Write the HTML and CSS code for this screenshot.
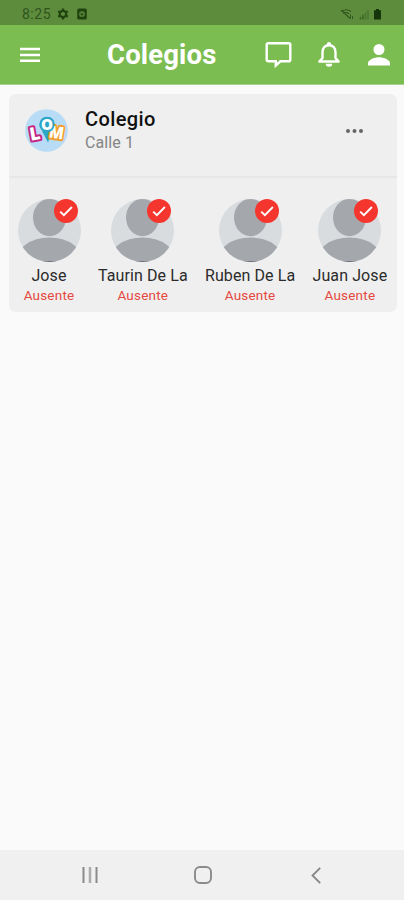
FILE: index.html
```html
<!DOCTYPE html>
<html lang="es">
  <head>
    <meta charset="UTF-8" />
    <meta name="viewport" content="width=device-width, initial-scale=1.0" />
    <title>Colegios</title>
    <link rel="stylesheet" href="styles.css">
  </head>
  <body>
    <!-- shared symbols -->
    <svg class="defs" width="0" height="0">
      <symbol id="avatar" viewBox="0 0 63 63">
        <clipPath id="round"><circle cx="31.5" cy="31.5" r="31.5" /></clipPath>
        <g clip-path="url(#round)">
          <rect width="63" height="63" fill="#d8dcdf" />
          <ellipse cx="31.5" cy="18.5" rx="16.5" ry="18.8" fill="#a4a8ad" />
          <ellipse cx="31.5" cy="63" rx="34" ry="24.5" fill="#a4a8ad" />
          <path d="M24 63h15" stroke="#55585c" stroke-width="1.4" />
        </g>
      </symbol>
      <symbol id="check" viewBox="0 0 24 24">
        <circle cx="12" cy="12" r="12" fill="#f5362f" />
        <path d="M6.2 12.6l3.7 3.6 8-8.2" fill="none" stroke="#fff" stroke-width="1.9" />
      </symbol>
    </svg>

    <div class="status-bar">
      <span class="clock">8:25</span>
      <svg class="gear" width="12" height="12" viewBox="0 0 12 12">
        <circle cx="6" cy="6" r="3.2" fill="none" stroke="#21440f" stroke-width="2.2" />
        <path d="M6 .4v2M6 9.6v2M1.2 3.2l1.7 1M9.1 7.8l1.7 1M1.2 8.8l1.7-1M9.1 4.2l1.7-1" stroke="#21440f" stroke-width="2.2" />
      </svg>
      <svg class="app" width="10" height="12" viewBox="0 0 10 12">
        <rect x=".2" y=".5" width="9.6" height="11" rx="1.6" fill="#21440f" />
        <circle cx="5" cy="6" r="2.2" fill="none" stroke="#5d8c3d" stroke-width="1.3" />
        <path d="M5 4.6v1.6" stroke="#5d8c3d" />
      </svg>
      <svg class="signal" width="44" height="12" viewBox="0 0 44 12">
        <path d="M1 3.5q5-3.5 10 0M3 5.6q3-2.3 6 .2M1.5 2l8.5 8.5" fill="none" stroke="#34591e" stroke-width="1.2" />
        <path d="M10.5 6.5v4M12.5 8v3" stroke="#34591e" />
        <path d="M20.5 9v2.5M23 6.8v4.7" stroke="#3b6422" stroke-width="1.5" />
        <path d="M25.5 4.5v7M28 2v9.5" stroke="#4a7530" stroke-width="1.5" />
        <path d="M34 2.3h2V1h3v1.3h2v9.2h-7z" fill="#17350a" />
      </svg>
    </div>

    <header class="app-bar">
      <svg class="menu" width="20" height="15" viewBox="0 0 20 15">
        <path d="M0 2h20M0 8h20M0 13.7h20" stroke="#fff" stroke-width="2.4" />
      </svg>
      <h1>Colegios</h1>
      <svg class="chat" width="27" height="27" viewBox="0 0 27 27">
        <path d="M3.3 2.2h20.4q1.6 0 1.6 1.6v14.9q0 1.6-1.6 1.6h-8.3l-4.6 4.2v-4.2H3.3q-1.6 0-1.6-1.6V3.8q0-1.6 1.6-1.6z" fill="none" stroke="#fff" stroke-width="2.4" />
      </svg>
      <svg class="bell" width="24" height="27" viewBox="0 0 24 27">
        <path d="M2.3 20.5l3.2-3.4V11.5c0-4.500 2.500-7.300 6.500-7.300s6.500 2.800 6.500 7.300v5.600l3.200 3.400z" fill="none" stroke="#fff" stroke-width="2.4" stroke-linejoin="round" />
        <circle cx="12" cy="3.2" r="2.1" fill="#fff" />
        <path d="M8.7 22.8h6.600a3.300 3 0 0 1-6.600 0z" fill="#fff" />
      </svg>
      <svg class="user" width="22" height="22" viewBox="0 0 22 22">
        <circle cx="11" cy="5.5" r="5.5" fill="#fff" />
        <path d="M0 21.5v-2.200c0-3.900 7.300-6 11-6s11 2.100 11 6v2.200z" fill="#fff" />
      </svg>
    </header>

    <main>
      <section class="card">
        <div class="card-head">
          <svg class="logo" width="43" height="43" viewBox="0 0 43 43">
            <circle cx="21.5" cy="21.5" r="21.3" fill="#b9dcf6" />
            <circle cx="22" cy="15.5" r="7.7" fill="#2da5c8" />
            <path d="M17 22l6 11.500 4-12z" fill="#2da5c8" />
            <g class="logo-text">
              <text x="4.5" y="31" font-size="18" stroke="#c32583" transform="rotate(-10 10 25)">L</text>
              <text x="24.5" y="29.500" font-size="17" textLength="14.500" lengthAdjust="spacingAndGlyphs" stroke="#efa02c" transform="rotate(9 32 23)">M</text>
              <text x="16" y="21" font-size="15" textLength="12" lengthAdjust="spacingAndGlyphs" stroke="#2da5c8">O</text>
            </g>
          </svg>
          <div class="school">
            <h2>Colegio</h2>
            <p>Calle 1</p>
          </div>
          <svg class="more" width="17" height="4" viewBox="0 0 17 4">
            <g fill="#666"><circle cx="2" cy="2" r="2" /><circle cx="8.5" cy="2" r="2" /><circle cx="15" cy="2" r="2" /></g>
          </svg>
        </div>

        <div class="students">
          <div class="student">
            <div class="photo"><svg width="63" height="63"><use href="#avatar" /></svg><svg class="badge"><use href="#check" /></svg></div>
            <span class="name">Jose</span>
            <span class="state">Ausente</span>
          </div>
          <div class="student wide">
            <div class="photo"><svg width="63" height="63"><use href="#avatar" /></svg><svg class="badge"><use href="#check" /></svg></div>
            <span class="name">Taurin De La</span>
            <span class="state">Ausente</span>
          </div>
          <div class="student wide">
            <div class="photo"><svg width="63" height="63"><use href="#avatar" /></svg><svg class="badge"><use href="#check" /></svg></div>
            <span class="name">Ruben De La</span>
            <span class="state">Ausente</span>
          </div>
          <div class="student medium">
            <div class="photo"><svg width="63" height="63"><use href="#avatar" /></svg><svg class="badge"><use href="#check" /></svg></div>
            <span class="name">Juan Jose</span>
            <span class="state">Ausente</span>
          </div>
        </div>
      </section>
    </main>

    <nav class="nav-bar">
      <svg width="16" height="16" viewBox="0 0 16 16">
        <path d="M1.5 0v16M14.5 0v16" stroke="#8a8a8a" stroke-width="2" />
        <path d="M8 0v16" stroke="#ababab" stroke-width="2.5" />
      </svg>
      <svg class="home" width="18" height="18" viewBox="0 0 18 18">
        <rect x="1" y="1" width="16" height="16" rx="5" fill="none" stroke="#8a8a8a" stroke-width="1.9" />
      </svg>
      <svg width="10" height="17" viewBox="0 0 10 17">
        <path d="M9.2.8L1.5 8.5l7.7 7.7" fill="none" stroke="#858585" stroke-width="1.8" />
      </svg>
    </nav>
  </body>
</html>
```

FILE: styles.css
```css
* {
  box-sizing: border-box;
}
html, body {
  height: 100%;
  margin: 0;
  padding: 0;
}
body {
  display: flex;
  flex-direction: column;
  overflow: hidden;
  background: #fafafa;
  font-family: Roboto, 'Liberation Sans', sans-serif;
}
svg {
  display: block;
  flex: none;
}
h1, h2, p {
  margin: 0;
}
.defs {
  position: absolute;
}

.status-bar {
  display: flex;
  align-items: center;
  height: 25px;
  flex: none;
  padding: 2px 20px 0 22px;
  background: #5d8c3d;
}
.clock {
  width: 29px;
  font-size: 14px;
  letter-spacing: 0.5px;
  color: #31531d;
}
.gear {
  margin-left: 6px;
}
.app {
  margin-left: 8px;
}
.signal {
  margin-left: auto;
}

.app-bar {
  display: flex;
  align-items: center;
  height: 60px;
  flex: none;
  padding: 0 14px 0 20px;
  background: #7bbd50;
  border-bottom: 1px solid #a9cf90;
  color: #fff;
}
.app-bar h1 {
  width: 110px;
  margin-left: 67px;
  font-size: 27.5px;
  font-weight: 700;
  line-height: 32px;
  letter-spacing: 0.15px;
  white-space: nowrap;
}
.chat {
  margin-left: 48px;
}
.bell {
  margin-left: 25px;
}
.user {
  margin-left: 27px;
}

main {
  flex: 1;
  padding: 9px 7px 0 9px;
}
.card {
  height: 218px;
  border-radius: 7px;
  background: #efefef;
}
.card-head {
  display: flex;
  height: 84px;
  padding: 15px 34px 0 16px;
  border-bottom: 2px solid #e7e7e7;
}
.logo-text {
  font-family: 'Open Sans', sans-serif;
  font-weight: 800;
  fill: #fff;
  stroke-width: 4px;
  stroke-linejoin: round;
  paint-order: stroke;
}
.school {
  margin-left: 17px;
}
.school h2 {
  font-size: 20px;
  font-weight: 500;
  line-height: 21px;
  letter-spacing: 0.4px;
  color: #111;
}
.school p {
  font-size: 16px;
  line-height: 25px;
  letter-spacing: 0.1px;
  color: #858585;
}
.more {
  margin: 20px 0 0 auto;
}

.students {
  display: flex;
  gap: 17.3px;
  padding: 21px 8.5px 0;
}
.student {
  display: flex;
  flex: none;
  flex-direction: column;
  align-items: center;
  width: 63px;
  white-space: nowrap;
}
.student.wide {
  width: 90px;
}
.student.medium {
  width: 75px;
}
.photo {
  position: relative;
}
.badge {
  position: absolute;
  top: 0;
  right: 3px;
  width: 24px;
  height: 24px;
}
.name {
  margin-top: 4px;
  font-size: 16px;
  line-height: 20px;
  letter-spacing: 0.1px;
  color: #2b2b2b;
}
.state {
  font-size: 13.5px;
  line-height: 19px;
  letter-spacing: 0.2px;
  color: #e5483f;
}

.nav-bar {
  display: flex;
  align-items: center;
  justify-content: space-between;
  height: 50px;
  flex: none;
  padding: 0 83px 0 82px;
  background: #f0f0f0;
}
.home {
  margin-right: 4px;
}
```
